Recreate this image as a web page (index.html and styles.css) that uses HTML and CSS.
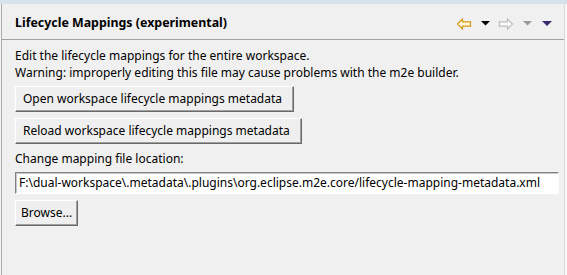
FILE: index.html
```html
<!DOCTYPE html>
<html>
<head>
<meta charset="utf-8">
<link rel="stylesheet" href="styles.css">
</head>
<body>
<div class="topstrip"></div>
<div class="frame">
  <div class="panel">
    <div class="header">
      <div class="title">Lifecycle Mappings (experimental)</div>
      <div class="tools">
        <svg class="ico arrow" width="16" height="12" viewBox="0 0 16 12"><path d="M1.5 6 L6.5 1 L6.5 3.8 L14.5 3.8 L14.5 8.2 L6.5 8.2 L6.5 11 Z" fill="#fff6d8" stroke="#d49a1c" stroke-width="1.2"/></svg>
        <svg class="ico tri" width="9" height="5" viewBox="0 0 9 5"><path d="M0 0 H9 L4.5 4.5 Z" fill="#000"/></svg>
        <svg class="ico arrow" width="16" height="12" viewBox="0 0 16 12"><path d="M14.5 6 L9.5 1 L9.5 3.8 L1.5 3.8 L1.5 8.2 L9.5 8.2 L9.5 11 Z" fill="#fbfbfb" stroke="#bdbdbd" stroke-width="1.2"/></svg>
        <svg class="ico tri" width="9" height="5" viewBox="0 0 9 5"><path d="M0 0 H9 L4.5 4.5 Z" fill="#9a9a9a"/></svg>
        <svg class="ico tri" width="10" height="5" viewBox="0 0 10 5"><path d="M0 0 H10 L5 5 Z" fill="#3b2a6e"/></svg>
      </div>
    </div>
    <div class="content">
      <p class="line">Edit the lifecycle mappings for the entire workspace.</p>
      <p class="line">Warning: improperly editing this file may cause problems with the m2e builder.</p>
      <div class="btnrow"><button class="btn">Open workspace lifecycle mappings metadata</button></div>
      <div class="btnrow"><button class="btn">Reload workspace lifecycle mappings metadata</button></div>
      <p class="line label">Change mapping file location:</p>
      <input class="field" type="text" value="F:\dual-workspace\.metadata\.plugins\org.eclipse.m2e.core/lifecycle-mapping-metadata.xml">
      <div class="btnrow browse"><button class="btn btn-small">Browse...</button></div>
    </div>
  </div>
</div>
</body>
</html>
```
FILE: styles.css
```css
html, body {
  margin: 0;
  padding: 0;
  width: 567px;
  height: 275px;
  overflow: hidden;
  background: #f0f0f0;
  font-family: "Noto Sans", "Open Sans", sans-serif;
  font-size: 12px;
  color: #000;
}
.topstrip {
  height: 4px;
  background: #d8e2ee;
}
.frame {
  height: 271px;
  padding-left: 1px;
  padding-right: 2px;
  background: #f7f7f7;
}
.panel {
  height: 100%;
  background: #f0f0f0;
  border-left: 1px solid #a8a8a8;
  border-right: 1px solid #dcdcdc;
}
.header {
  height: 35px;
  display: flex;
  align-items: center;
  justify-content: space-between;
  border-bottom: 1px solid #a0a0a0;
  padding-left: 13px;
  padding-right: 12px;
}
.title {
  font-weight: bold;
  font-size: 12.4px;
  padding-top: 1px;
}
.tools {
  display: flex;
  align-items: center;
  padding-top: 4px;
}
.ico { display: block; }
.tools .arrow + .tri { margin-left: 9px; }
.tools .tri + .arrow { margin-left: 8px; }
.tools .tri + .tri { margin-left: 10px; }
.content {
  padding: 7px 8px 0 13px;
}
.line {
  margin: 0;
  line-height: 17px;
  white-space: nowrap;
}
.btnrow {
  margin-top: 5px;
  display: flex;
}
.btnrow + .btnrow { margin-top: 6px; }
.btnrow.browse { margin-top: 6px; }
.btn {
  font-family: inherit;
  font-size: 12px;
  color: #000;
  background: #efefef;
  height: 26px;
  padding: 0 11px 1px 7px;
  border: 1px solid;
  border-color: #fff #6a6a6a #6a6a6a #fff;
  box-shadow: inset -1px -1px 0 #a0a0a0;
  border-radius: 0;
  white-space: nowrap;
}
.btn-small {
  padding: 0 5px 1px 5px;
}
.label {
  margin-top: 6px;
}
.field {
  display: block;
  box-sizing: border-box;
  width: 544px;
  height: 22px;
  margin-top: 5px;
  font-family: inherit;
  font-size: 12px;
  color: #000;
  background: #fff;
  padding: 0 3px 1px 3px;
  border: 1px solid;
  border-color: #828282 #fff #fff #828282;
  box-shadow: inset 1px 1px 0 #c8c8c8;
}
```
